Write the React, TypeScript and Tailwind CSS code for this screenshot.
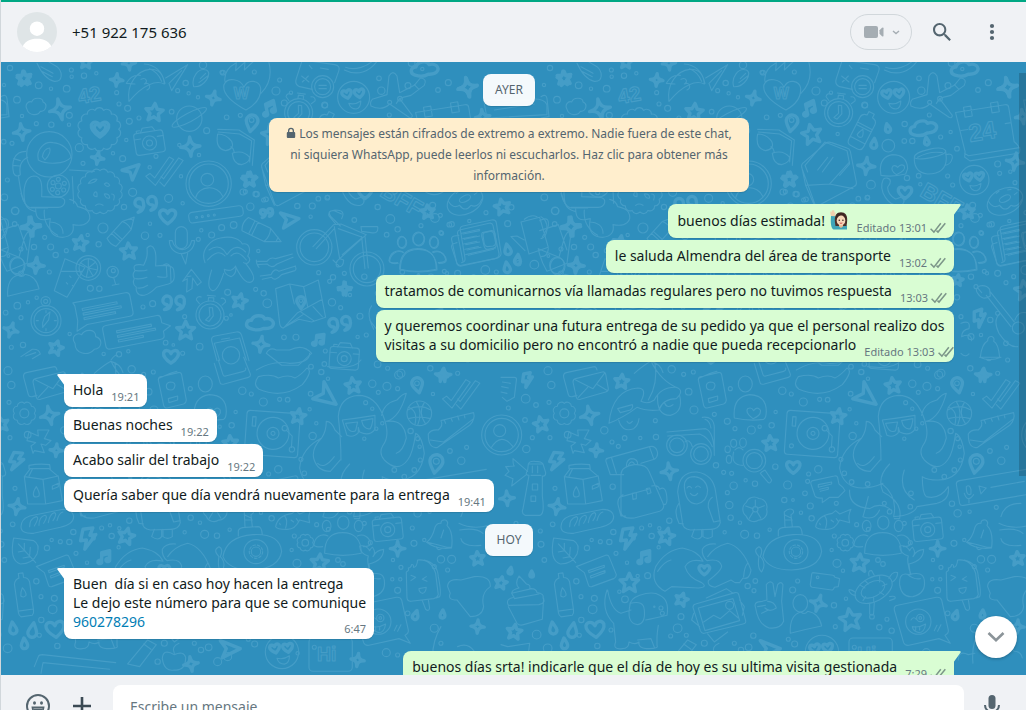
import React from "react";

type Pt = [number, number, number];

const HEART = "M0 9C-7 4-11 0-10-5C-8-10-2-9 0-4C2-9 8-10 10-5C11 0 7 4 0 9Z";
const STAR = "M0-10L3-3.5L10-3L4.800 2L6.500 9.500L0 5.500L-6.500 9.500L-4.800 2L-10-3L-3-3.500Z";
const SPARK = "M0-10C.8-3 3-.8 10 0C3 .8 .8 3 0 10C-.8 3-3 .8-10 0C-3-.8-.8-3 0-10Z";
const DROP = "M0-10C3-4 6 0 6 4A6 6 0 0 1-6 4C-6 0-3-4 0-10Z";
const BOLT = "M-4-10L6-10L2-3L8-3L-5 10L-2 1L-8 1Z";
const PIN = "M0 10C-4 4-7 1-7-3A7 7 0 0 1 7-3C7 1 4 4 0 10Z";
const PLANE = "M-10-8L10 0L-8 9L-4 0Z";
const NOTE = "M-5 8V-7L7-10V5M-5-3L7-6M-5 8A3 2.500 0 1 1-5 6M7 5A3 2.500 0 1 1 7 3";
const CLOUD = "M-14 7C-22 4-19-5-12-4C-10-12 4-12 6-6C14-8 20-2 17 3C14 8 8 7 4 7C-2 10-9 9-14 7Z";
const QUOTES = "M-4-3A4 4 0 1 0-8 1C-6 1-6 4-9 6C-4 5-3 0-4-3ZM8-5A4 4 0 1 0 4-1C6-1 6 2 3 4C8 3 9-2 8-5Z";

function Shape({ d, x, y, s = 1, r = 0 }: { d: string; x: number; y: number; s?: number; r?: number }) {
  return (
    <path d={d} transform={`translate(${x} ${y}) rotate(${r}) scale(${s})`} vectorEffect="non-scaling-stroke" />
  );
}

function Many({ d, at, r = 0 }: { d: string; at: Pt[]; r?: number }) {
  return (
    <>
      {at.map(([x, y, s], i) => (
        <Shape key={i} d={d} x={x} y={y} s={s / 10} r={r + ((i * 17) % 30) - 12} />
      ))}
    </>
  );
}

function Dots({ at }: { at: Pt[] }) {
  return (
    <>
      {at.map(([x, y, r], i) => (
        <circle key={i} cx={x} cy={y} r={r} />
      ))}
    </>
  );
}

function wavy(cx: number, cy: number, r: number, n: number, bump: number) {
  let d = "";
  for (let i = 0; i <= n; i++) {
    const a = (i / n) * Math.PI * 2;
    const x = (cx + r * Math.cos(a)).toFixed(1);
    const y = (cy + r * Math.sin(a)).toFixed(1);
    d += i === 0 ? `M${x} ${y}` : `A${bump} ${bump} 0 0 1 ${x} ${y}`;
  }
  return d + "Z";
}

function LoveFace({ x, y, r }: { x: number; y: number; r: number }) {
  return (
    <g>
      <circle cx={x} cy={y} r={r} />
      <Shape d={HEART} x={x - r * 0.42} y={y - r * 0.2} s={r / 34} r={-14} />
      <Shape d={HEART} x={x + r * 0.35} y={y - r * 0.25} s={r / 34} r={-8} />
      <path d={`M${x - r * 0.3} ${y + r * 0.38}q${r * 0.4} ${r * 0.1} ${r * 0.75}-${r * 0.15}q0 ${r * 0.45}-${r * 0.3} ${r * 0.5}q-${r * 0.35} 0-${r * 0.45}-${r * 0.35}z`} />
    </g>
  );
}

function Camera({ x, y, r }: { x: number; y: number; r: number }) {
  return (
    <g transform={`translate(${x} ${y}) rotate(${r})`}>
      <rect x="-44" y="-30" width="88" height="66" rx="9" />
      <path d="M-22-30l7-13h30l7 13M-44-12h20M26-12h18M-34-30v-7h10" />
      <circle r="21" cy="4" />
      <circle r="9" cy="4" />
    </g>
  );
}

function Watch({ x, y, r }: { x: number; y: number; r: number }) {
  return (
    <g transform={`translate(${x} ${y}) rotate(${r})`}>
      <circle r="42" />
      <circle r="33" />
      <path d="M-4-22l4 24l-12 14l10 4l12-18l-4-24zM-8-42v-10h16v10M-12-58h24M-34-32l-10-10a10 10 0 0 1 14-10M34-32l10-10a10 10 0 0 0-14-10" />
    </g>
  );
}

function Gear({ x, y, r }: { x: number; y: number; r: number }) {
  return (
    <g>
      <path d={wavy(x, y, r, 8, r * 0.42)} />
      <circle cx={x} cy={y} r={r * 0.45} />
    </g>
  );
}

function People({ x, y }: { x: number; y: number }) {
  return (
    <g transform={`translate(${x} ${y})`}>
      <ellipse cx="4" cy="-52" rx="17" ry="20" />
      <ellipse cx="-46" cy="-42" rx="13" ry="17" />
      <ellipse cx="50" cy="-42" rx="13" ry="17" />
      <path d="M-52 40c0-45 20-62 54-62s56 20 56 62q-55 12-110 0zM-58 20c-14 2-26 0-26-6c2-22 22-36 42-26M64 20c12 0 22-2 22-10c-4-20-22-30-40-22" />
    </g>
  );
}

function Ticks({ x, y, s = 1 }: { x: number; y: number; s?: number }) {
  return (
    <path
      transform={`translate(${x} ${y}) scale(${s})`}
      d="M-50 22l13-9l15 14l46-66l14 8l-58 82zM-2 22l8 8l48-66l14 8l-60 82l-14-14"
    />
  );
}

function Person({ x, y }: { x: number; y: number }) {
  return (
    <g transform={`translate(${x} ${y})`}>
      <ellipse cx="-16" cy="-36" rx="22" ry="26" />
      <path d="M-46 54c-2-36 8-58 32-64q10 10 20-2c26 4 38 24 42 44q-50 10-94 22z" />
    </g>
  );
}

function Handset({ x, y }: { x: number; y: number }) {
  return (
    <path
      transform={`translate(${x} ${y})`}
      d="M-30-34c4-10 22-6 22 4c0 12-6 12-8 18c0 12 8 26 22 34c8 4 12-8 22-2c10 8 4 20-6 22c-36 6-66-44-52-76z"
    />
  );
}

/* Doodles of the upper left part. */
function UpperLeft() {
  return (
    <g transform="translate(0 60) scale(.3333)">
      <Dots at={[[27,24,8],[9,75,5],[113,76,10],[150,86,5],[48,119,10],[211,30,6],[212,50,5],[249,47,8],[286,40,5],[197,86,10],[347,98,6],[354,132,6],[380,145,9],[205,166,9],[204,194,5],[151,194,8],[106,191,6],[63,168,5],[33,250,6],[8,245,7],[235,263,12],[246,310,6],[336,280,5],[365,296,9],[376,240,5],[385,184,9],[414,174,6],[512,155,7],[465,289,6],[446,322,5],[540,349,5],[395,397,12],[369,441,8],[503,415,12],[545,430,5],[447,491,5],[432,527,11],[477,526,6],[601,511,5],[632,525,9],[592,538,6],[662,503,9],[698,495,10],[748,440,11],[733,395,6],[767,403,8],[788,420,6],[617,212,9],[535,255,5],[594,285,5],[606,15,11],[663,37,6],[554,69,8],[530,92,6],[563,100,5],[591,112,5],[677,172,7],[718,166,6],[825,93,12],[836,60,6],[870,98,5],[850,129,9],[43,453,11],[41,492,7],[19,360,6],[10,412,10],[131,532,6],[60,567,6],[99,561,8],[149,561,9],[164,585,8],[196,572,6],[306,504,15],[293,553,8],[260,525,5],[145,636,6],[268,685,9],[295,686,8],[107,713,5],[81,727,5],[49,737,10],[14,758,7],[60,773,6],[206,822,5],[66,855,8],[31,862,6],[308,882,5],[354,883,8],[382,874,5],[426,741,6],[455,731,9],[494,848,7],[517,855,4],[596,860,10],[680,697,9],[764,688,6],[788,700,8],[799,730,13],[676,775,6],[772,573,5],[953,638,6],[889,438,8],[934,438,9],[979,413,7],[929,470,5],[1060,480,7],[986,664,6],[993,727,11],[1019,743,6],[1047,705,5],[1077,769,9],[1096,825,6],[1070,831,5],[849,832,7],[885,832,9],[973,873,6],[971,135,9],[690,765,4],[22,588,4],[551,770,6],[545,880,6]]} />
      <Many d={STAR} at={[[70,54,21],[460,156,26],[744,358,21],[238,549,22],[383,573,24],[716,723,22],[554,811,27],[165,863,21],[255,6,18]]} />
      <Many d={SPARK} at={[[177,148,32],[347,60,19],[62,216,25],[290,294,19],[568,260,29],[637,114,21],[90,500,29],[30,810,22],[104,617,22],[1032,686,20],[780,853,24],[384,10,20]]} />
      <Many d={NOTE} at={[[807,145,21],[955,840,18]]} />
      <Shape d={HEART} x={500} y={470} s={2.4} />
      <Shape d={PIN} x={752} y={190} s={2.5} r={10} />
      <circle cx="752" cy="180" r="7" />
      <Shape d={PLANE} x={395} y={330} s={2.5} r={-40} />
      <Shape d={PLANE} x={867} y={478} s={2.7} r={-5} />
      <Shape d={QUOTES} x={440} y={438} s={3.2} />
      <Shape d={QUOTES} x={522} y={735} s={3.2} r={10} />
      <Shape d={QUOTES} x={1022} y={798} s={3.2} />
      <Shape d={QUOTES} x={800} y={462} s={1.8} />
      <Shape d={CLOUD} x={778} y={790} s={2.2} />
      <path d="M78 148c-8-14 4-26 14-22c6-16 34-14 34 0c16 6 8 30-8 28c-6 14-34 14-40-6zM222 850c-14-20 6-34 20-26c10-18 44-18 42 6c24 8 18 36-4 38c-20 22-58 14-58-18z" />
      <path d="M108 10c12 26 28 50 52 54c26 2 26-28 8-44l-24-14M122 34l32 16M120 20l36 20M578 80c-8-28 14-58 38-50c20 8-4 52-38 50zM598 56l16-16M594 68l26-20M494 54l66-40l-48 78l-8-22l38-38" />
      <text x="228" y="124" fontSize="62" fontWeight="700" transform="rotate(-10 275 90)">42</text>
      <path d="M384 124c-8-52 24-92 62-96c34-2 42 22 44 44c-24-12-62 0-106 52zM402 72l-26-2c12-22 26-26 42-24M420 58c16-8 22 8 10 14c16-8 22 12 8 18M446 26c20 8 30 22 36 38M430 12q50 4 62 58" />
      <path d="M735 150c-40-22-72-48-66-76c10-24 50-18 60 8c12-28 46-20 50 2c2 32-22 54-44 66zM672 64c-4-28 12-44 34-56l-2 24l28-26l-2 24l36-34M780 100c28-28 32-60 24-92" />
      <text x="698" y="118" fontSize="48" fontWeight="700">W</text>
      <path d="M904 0l-18 56c-4 12 0 20 10 24l38 8M905 0l96 14c12 2 16 8 12 20l-12 34M902 48l22 18M922 48l-18 18M958 24l24 4M925 16l8 10M1034 22c24 10 70 0 90-30M1030 30c40 20 80 4 102-32" />
      <circle cx="965" cy="80" r="33" /><circle cx="965" cy="80" r="24" />
      <path d="M954 76h22M954 86h22" />
      <LoveFace x={1058} y={112} r={48} />
      <Watch x={893} y={158} r={8} />
      <circle cx="565" cy="176" r="38" />
      <ellipse cx="565" cy="172" rx="58" ry="13" transform="rotate(-28 565 172)" />
      <path d={wavy(295, 208, 58, 14, 14)} />
      <Shape d={HEART} x={297} y={208} s={2.6} /><Shape d={HEART} x={297} y={208} s={1.7} />
      <Camera x={445} y={245} r={-9} />
      <Camera x={1030} y={892} r={4} />
      <circle cx="145" cy="283" r="68" />
      <path d="M112 300c-8-32 20-58 44-52c26 2 50 20 54 44c-20 22-74 22-98 8zM124 290q4-24 22-26q6 14-14 36zM74 274c-34 0-44 32-36 66c4 10 16 10 20 4c-4-24 0-40 22-52M38 296l20 6M36 316l20 2M52 346c6 40 8 64 20 84q8 20 30 24M72 428c-8-40 0-78 26-80c24 0 26 24 24 62l56 2c22 6 14 28-6 30l-82 0M104 446c0 28 10 40 44 30c-10 44 14 56 36 56c28-2 36-18 32-38c38 8 60-12 46-38c-8-12-24-14-32-16c-4-14-14-20-24-22M206 330l74 4M214 350l4 80M186 520c0-24-20-34-38-34" />
      <circle cx="172" cy="378" r="33" /><circle cx="172" cy="378" r="9" />
      <Dots at={[[172,358,6],[190,370,6],[188,390,6],[170,398,6],[154,388,6],[156,368,6]]} />
      <path d={wavy(297, 394, 62, 16, 14)} />
      <path d="M262 370q12-16 26-12q-6 12-26 12M310 372q10-8 16 4q-8 8-16-4M280 398q10-8 8 12q-14 0-8-12M310 402q4 16 16 12q0-14-16-12M332 402q12 0 6 18M284 436q10-8 22 0" />
      <Ticks x={482} y={328} s={0.95} />
      <circle cx="623" cy="371" r="68" /><circle cx="623" cy="371" r="59" /><circle cx="619" cy="359" r="19" />
      <path d="M584 414c8-38 66-42 82-4" />
      <path d="M650 208l64 2l46 30l-6 76M652 216l64 6l36 20l-6 64M650 222q-8 44 24 50q28-6 18-28q-16-22-42-22zM694 280q4 34 28 34q24-6 24-22q-20-24-52-12zM690 260q8 4 10 18" />
      <rect x="-82" y="-16" width="164" height="32" rx="11" transform="translate(645 463) rotate(-8)" />
      <Dots at={[[587,472,3],[604,470,3],[622,467,3],[640,465,3]]} />
      <g transform="translate(365 510) rotate(-48)"><path d="M-50-18h68l34 18l-34 18h-68q-8-18 0-36zM18-18q8 18 0 36M-30-18v36M-22-18v36M42-6v12" /></g>
      <g transform="translate(783 517) rotate(26)"><path d="M-56-22h74l46 22l-46 22h-74q-12-22 0-44zM18-22q10 22 0 44M-34-22v44M-24-22v44M50-8v14" /></g>
      <circle cx="940" cy="562" r="53" /><circle cx="940" cy="562" r="43" /><circle cx="1098" cy="627" r="51" /><circle cx="1098" cy="627" r="41" />
      <path d="M936 560l62-66l22-2l76 32l-80 72l-16-96M946 566l54-60M1012 506l72 26l-60 52M1018 498l-28-28q-14-20 10-18l22 10M1022 476q14-26-20-26q-22 2-18 18l20 24M1080 500h50q4 22-20 18l-28-4zM1092 528l10 96M1082 530l10 96M1016 596q-16 12-8 24q20 4 20-20zM996 600l20 20" />
      <rect x="523" y="500" width="36" height="66" rx="18" />
      <path d="M505 542c2 52 72 52 76 0h-9c-6 36-50 36-58 0zM540 580l14 32l6-32" />
      <path d="M612 608c-16-40 20-70 46-74c40-8 60 6 66 18c26-6 24 24 16 36c14 12 0 28-12 20M624 570q26-18 44 0l10 14l12-14q20-18 44 6M620 600q30-36 52-12M690 588q20-22 46 12M670 628q22 10 34-10q4 24-14 32q-20-6-20-22zM668 640q-18 54-34 52q-20-8-2-62M704 620q30 60 50 44q14-12-20-54" />
      <path d="M402 632q-10-20 16-18l10 2c10-20 12-30 10-52q14-14 22 4c8 14 4 32 4 50l20-2q34 0 34 14c4 26 2 36-16 42l-36 10q-20 20-36 24c-22 2-26-14-24-24q-14-10-6-26q-8-12 2-24zM404 632q24 2 34-2M404 656q20 2 34-4M410 684q16 2 30-8M470 650q20 4 28 0l-2-32M488 615q12-8 20 4l2 46" />
      <path d="M770 604l28 0q10-14 26-8l50-14M770 614l28-2q14 16 30 0l48-20M766 600q0 14 8 22M778 648l32-4q10-22 24-10l50-16M784 658l28-6q10 14 30-8l40-12q6-6 0-14" />
      <Person x={66} y={655} />
      <path d="M192 596l-32 96l38 20l54-90zM182 634l62 0M206 648l4 4M196 668l4 4M214 676l4 4" />
      <circle cx="262" cy="624" r="37" /><circle cx="262" cy="624" r="28" />
      <path d="M262 624v-28M262 624l22-18M262 624l28 6M262 624l14 24M262 624l-24-16M262 624l-6 28" />
      <circle cx="335" cy="636" r="17" /><circle cx="337" cy="632" r="6" /><path d="M338 653l6 20M334 676l20-4" />
      <path d="M545 664l26-36l30 38l-12 10l-14-22l-2 32l-16 10l2-40zM560 650l10-2" />
      <g transform="translate(305 748) rotate(-11)"><path d="M-84-36h160q12 0 12 12v48q0 12-12 12h-130l-34 14l8-30v-46q-4-10-4-10zM-60-14h106v6h-106zM-60 0h116v6h-116zM-60 14h96v6h-96z" /></g>
      <g transform="translate(408 815) rotate(-11)"><path d="M-88-36h156q10 0 10 12v12l24 14l-24 12v10q0 12-12 12h-154q-12 0-12-12v-48q0-12 12-12zM-60-14h106v6h-106zM-60 0h116v6h-116zM-60 14h76v6h-76z" /></g>
      <circle cx="135" cy="782" r="45" /><circle cx="135" cy="782" r="36" /><circle cx="134" cy="724" r="14" /><circle cx="134" cy="724" r="6" />
      <path d="M125 788l6-18l16-14l-4 24l-18 22zM106 782h6M160 782h6M135 752v6M135 806v6" />
      <Watch x={627} y={765} r={4} />
      <path d="M824 686l42-14l42 8l44-20l22 112l-42 14l-38-8l-48 26q-8-2-10-14zM866 672l14 60M908 680l12 60M848 804l42-46l74-40M900 756l38 26M852 800l54-36M936 740l28 30" strokeDasharray="none" />
      <Shape d={PIN} x={900} y={728} s={1.8} /><circle cx="900" cy="722" r="5" />
      <path d="M632 842q-2-12 10-14l64-12q12-2 16 10l22 76M632 842l16 60M640 850l76-16l20 66M640 850l16 52M662 838l24-4" />
      <circle cx="690" cy="886" r="26" />
      <path d="M796 880q10-20 30-10l40 0q40-20 66 10l-40 36h-50zM60 890l34-22q20-2 24 14l-24 14M74 888l30-10M330 900q14-20 20-12" />
      <Shape d={HEART} x={510} y={890} s={2.2} />
      <path d="M0 470q20 10 18 40q-4 24-18 26M0 590q20 0 22-24M0 110q16-10 18 6l6 54l-24 4M1112 738q-18 20 6 70M1106 780l30 40" />
    </g>
  );
}

/* Doodles of the upper right part. */
function UpperRight() {
  return (
    <g transform="translate(200 60) scale(.3333)">
      <Dots at={[[534,55,7],[541,92,11],[621,77,9],[742,68,9],[711,90,7],[632,9,10],[664,27,5],[565,165,6],[491,192,8],[490,243,7],[514,243,8],[599,231,6],[629,216,5],[648,266,7],[372,136,8],[290,222,5],[498,354,8],[533,347,7],[538,373,5],[620,348,6],[635,375,6],[390,374,13],[352,416,7],[380,412,6],[770,312,9],[776,340,6],[808,335,5],[822,368,6],[695,436,9],[718,466,6],[675,465,6],[752,493,8],[660,497,6],[805,483,5],[722,520,6],[770,640,9],[795,668,6],[690,650,8],[738,640,5],[818,650,6],[705,680,6],[748,780,8],[770,760,6],[660,770,6],[690,830,9],[720,825,5],[795,850,7],[770,940,6],[688,925,8],[370,912,7],[600,940,12],[560,925,6],[330,920,7],[800,900,6],[66,38,7],[160,36,6],[126,396,9],[164,402,8],[195,418,7]]} />
      <Many d={STAR} at={[[212,222,29],[146,357,21],[850,690,28],[650,660,16],[680,455,20]]} />
      <Many d={SPARK} at={[[800,82,30],[376,318,26],[845,170,22],[822,305,26],[730,945,20]]} />
      <Many d={DROP} at={[[440,204,13],[399,250,15],[557,243,12]]} />
      <Shape d={CLOUD} x={548} y={205} s={2.2} r={-8} />
      <Shape d={CLOUD} x={672} y={28} s={2.2} r={-4} />
      <g transform="translate(362 215) rotate(27)"><path d="M-24-36q0-14 16-16v-12h18v12q16 2 16 16v74q0 14-14 14h-22q-14 0-14-14zM-24-20h50M-24 28h50M-24-12h50M0-8q10 14 8 22q-8 8-16 0q0-8 8-22z" /></g>
      <path d="M182 322q-2-10 8-16l64-56q8-6 18-2l46 16q8 2 10 10l18 92q2 10-8 14l-104 56q-10 4-14-8zM182 320l12 56l72-4l60-66M266 372l70 14M194 376l26 60M200 336l-8-20l60-70l66 26l8 40l-30 34M230 330l30-38M244 336l32-44" />
      <path d="M564 48q12-20 24 0l8 50l44-22l18-22q22 2 12 22l-40 30q-26 6-34 10l38 50q0 10-10 6l-58-40q-22 22-56 6q-4-12 4-20l44-14zM586 130l10-14M640 74l14 14" />
      <Dots at={[[566,127,6],[597,116,7]]} />
      <g transform="translate(735 210) rotate(-9)"><path d="M-82-66h150q10 0 10 10v104q10 10 14 24l-4 12h-150l-14-14l4-16zM-74-10h20M60-10h18M-74 60l10 8h156M-56-78h22v30h-22zM26-78h22v30h-22z" /></g>
      <text x="682" y="238" fontSize="74" fontWeight="700" transform="rotate(-9 735 210)">24</text>
      <path d="M520 292q0-14 44-24q40-10 50 4q4 10-40 20q-48 10-54 0zM520 292q-2 46 40 50q56 0 56-48l-2-22M614 284q22-6 20 10q-4 20-22 22M530 292q36-20 74-14" />
      <circle cx="442" cy="257" r="19" />
      <path d="M418 330q0-40 36-46q44 0 46 42l-6 16q-40 10-74 4zM466 344q-20-14-10-26q8-4 14 4q10-12 20-4q6 14-24 26z" />
      <Shape d={HEART} x={492} y={398} s={2} />
      <Handset x={456} y={394} />
      <text x="540" y="418" fontSize="68" fontWeight="700" transform="rotate(30 560 400)">BFF</text>
      <LoveFace x={700} y={360} r={44} />
      <ellipse cx="792" cy="424" rx="56" ry="38" transform="rotate(-25 792 424)" />
      <ellipse cx="792" cy="416" rx="18" ry="9" transform="rotate(-25 792 416)" />
      <path d="M742 424q14 24 34 12q16 22 34 0q20 10 34-20M766 400l8-6M800 390l10-2M820 404l8-6" />
      <People x={650} y={590} />
      <path d="M752 540q-2-10 8-12l14-2M752 540l16 72q4 8 14 6l100-22q14-4 12-16l-18-84q-2-8-12-6l-88 20q-8 2-6 12l16 82M786 522l50-10M790 538l46-10M794 554l42-8M798 570l42-8M802 586l76-18M850 518l20-4q6 0 8 6l6 28q0 8-8 10l-16 2q-8 0-10-8l-4-26q0-6 4-8z" />
      <path d="M710 700q-10-14 6-22q20-4 30 10l2 20q-24 16-38-8zM736 706l74 94M748 696l72 90M778 760q-24 20-4 60q30 44 56 40M822 780q10-30 40-20M710 684l12 14" />
      <circle cx="832" cy="804" r="18" />
      <Shape d={BOLT} x={717} y={775} s={2.4} r={-20} />
      <path d="M740 842q0-14 14-12q8 4 4 14q14 6 18 48l-58 0q4-40 22-50zM716 892q30 14 64 0M736 898q8 8 16 0M660 790q30-12 24 16q-22 4-22 24q30-12 30 12M660 880q14 14 24 2" />
      <path d="M1012 566l62 26l16-58q14-30 20-14l-12 90l-60 24q-20-34-26-68zM1016 512l56-18l26 76" />
    </g>
  );
}

/* Band between the encryption card and the first bubbles. */
function MiddleBand() {
  return (
    <g transform="translate(260 60) scale(.3333)">
      <People x={468} y={588} />
      <path d="M572 562q-2-10 10-12l6-2M572 562l16 48q4 8 14 6l100-20q20-4 18-18l-14-90q-2-10-14-8l-86 18q-10 2-8 12l14 84q2 12-10 14M602 520l54-12M606 536l40-8M608 552l40-8M612 568l40-8M614 584l90-20M664 518l28-6q8 0 10 8l4 34q0 8-8 10l-18 4q-8 0-10-8l-8-32q0-8 2-10z" />
      <path d="M780 486l56-14l26 90l-58 20zM790 540l-22-12l-18 2l42 42M836 482q30-16 26 16l-18 34M790 478q20-16 38-8" />
      <Dots at={[[740,491,9],[751,442,8],[675,458,6],[772,610,8],[820,614,13],[673,630,13],[706,636,6],[565,494,7],[522,474,13],[540,518,6],[410,508,8],[388,477,13],[350,441,8],[377,524,7],[424,636,7],[386,690,11],[468,712,8],[250,640,6],[216,652,8],[900,640,7],[882,452,11],[550,634,6],[310,650,8],[350,700,7]]} />
      <Many d={STAR} at={[[724,440,23],[908,54,20]]} />
      <Many d={SPARK} at={[[930,500,29],[946,616,24],[620,82,28],[250,686,19]]} />
      <Many d={DROP} at={[[740,568,16],[770,598,15],[738,622,16]]} />
      <ellipse cx="888" cy="616" rx="22" ry="25" />
      <path d="M668 120h120q60-10 70 14v30l-180 10zM690 136l120-18M700 150l120-18M900 400q10 40 30 44l50 0M970 450q-4 50 40 76" />
    </g>
  );
}

/* Doodles of the lower half. */
function Lower() {
  return (
    <g transform="translate(-40 360) scale(.3333)">
      <Dots at={[[141,32,12],[151,75,11],[74,116,13],[105,135,7],[144,127,6],[72,180,7],[94,233,6],[147,233,6],[76,267,11],[200,224,10],[310,211,11],[333,246,6],[352,259,6],[371,234,7],[418,234,5],[465,231,8],[463,182,6],[512,28,11],[548,43,6],[577,36,6],[563,95,10],[579,150,12],[640,163,6],[688,86,6],[679,184,9],[702,206,6],[751,210,12],[776,200,5],[812,196,8],[824,156,5],[844,92,11],[871,102,6],[907,126,12],[956,118,6],[980,119,7],[1049,101,7],[1046,148,5],[1081,36,8],[1101,56,5],[1250,13,10],[1313,45,12],[1234,71,11],[1278,79,12],[1252,97,6],[1310,86,6],[1416,102,5],[1055,228,11],[1066,190,5],[1349,213,8],[1370,236,6],[823,320,8],[645,316,8],[668,337,6],[692,340,6],[734,361,5],[762,371,8],[698,377,11],[679,398,6],[685,435,11],[689,473,8],[717,488,5],[860,375,12],[920,364,6],[912,400,7],[850,420,8],[876,420,4],[952,328,11],[923,342,6],[928,438,9],[900,458,5],[932,475,8],[1006,430,6],[1067,494,6],[1102,508,6],[1166,455,7],[1210,490,6],[1353,431,8],[1370,460,11],[1354,504,6],[1406,455,5],[1359,550,9],[1486,442,6],[1467,273,7],[1501,302,11],[1517,262,6],[162,385,6],[335,380,8],[155,493,7],[118,513,6],[120,553,9],[130,600,7],[258,564,8],[272,540,5],[298,545,6],[325,546,8],[337,516,8],[345,580,6],[378,608,5],[422,504,6],[447,496,5],[452,528,8],[397,534,6],[473,562,5],[475,505,5],[505,482,8],[671,517,5],[731,523,12],[768,527,8],[806,509,5],[992,570,5],[1000,528,6],[1008,610,12],[1026,632,5],[1131,600,7],[1146,612,7],[1228,548,6],[1320,622,6],[1296,600,5],[1294,658,5],[1310,691,9],[1318,658,5],[1440,598,11],[1472,598,12],[1460,630,6],[763,663,7],[740,678,8],[759,692,6],[875,690,9],[890,663,6],[1035,716,5],[999,736,8],[1003,800,6],[1113,770,7],[1158,778,6],[1135,802,8],[1172,812,8],[240,710,6],[280,715,9],[275,748,13],[372,718,10],[355,695,5],[440,647,9],[410,648,5],[226,664,8],[241,780,8],[107,824,13],[235,826,6],[289,858,8],[330,810,6],[540,770,9],[530,805,13],[509,828,6],[556,826,6],[757,827,8],[743,862,10],[862,838,6],[881,852,9],[1060,862,6],[1276,878,12],[1310,885,6],[1010,880,5],[140,865,13],[22,144,6],[45,490,6],[1420,620,6],[1390,540,5],[1420,805,12],[1440,850,6],[590,905,8],[610,850,9],[770,905,12],[800,890,12],[720,870,8],[700,850,6],[1340,760,7]]} />
      <Many d={STAR} at={[[120,192,22],[362,64,21],[1176,76,23],[1012,168,22],[808,249,22],[496,528,24],[385,668,28],[542,718,19],[1076,608,26],[1048,778,32],[40,815,22],[1550,595,20],[0,668,18]]} />
      <Many d={SPARK} at={[[266,166,28],[286,271,19],[505,334,25],[168,440,24],[18,415,22],[1442,46,19],[1310,566,22],[952,730,25],[1550,800,20],[690,912,22],[1190,900,20]]} />
      <Many d={DROP} at={[[156,804,18],[215,810,22],[190,850,16],[28,632,10],[92,642,9],[1364,765,14],[1445,762,12]]} r={4} />
      <Many d={BOLT} at={[[80,60,20],[167,304,26],[382,536,30]]} />
      <Shape d={HEART} x={283} y={808} s={2.7} r={-6} />
      <Shape d={HEART} x={877} y={322} s={2} />
      <Shape d={HEART} x={610} y={630} s={1.6} />
      <Shape d={PIN} x={1370} y={76} s={2.3} r={-12} /><circle cx="1368" cy="70" r="7" />
      <Shape d={PIN} x={1425} y={312} s={2.8} r={10} /><circle cx="1426" cy="304" r="9" />
      <Shape d={NOTE} x={432} y={592} s={2} />
      <Shape d={PLANE} x={1098} y={110} s={3.6} r={40} />
      <Shape d={PLANE} x={808} y={866} s={3} />
      <Gear x={190} y={160} r={30} />
      <Gear x={1033} y={548} r={22} />
      <path d="M188 52q-2-12 8-14l84-18q6 0 8 10M188 52l14 52q2 8 12 6l14-4M224 56l80-20q8-2 10 6l8 44q0 8-8 10l-76 22q-10 2-12-6l-10-46q0-8 8-10zM224 60l52 26l36-48M232 112l28-30M290 74l30 18" />
      <path d="M0 52h40q8 0 6 10l-6 50l-22 12l-14-12M4 66l24 4M2 80l20 4M0 96l18 4" />
      <path d="M324 190q10-100 86-106q30 0 10 40q20 10 40-4q20-40 66-38q26 10 0 34q-40 0-52 34q-40 4-66-8q-40 30-84 48zM350 146l44-12q4 8-6 16l-30 8zM462 10q10 60-20 110M400 40q30-26 50-36q30 8 36 34M352 176q10 44 46 30q14-10 16-30M470 106q-4 60 38 60q40-10 28-60M490 126q6 22 26 8M378 184q6 12 16 0M450 4q30 60 80 80" />
      <path d="M592 60q0-8 8-10l52-12q8-2 10 6l14 76q0 8-8 12l-50 12q-8 0-10-8l-16-76M596 54l32-14l20-6M616 78q0-10 12-12q14 0 14 10q-2 14-12 14q-14 0-14-12zM622 116l28-8v12l-26 8z" />
      <ellipse cx="733" cy="72" rx="21" ry="24" />
      <path d="M700 174q-6-64 46-70q50 2 50 50q0 20-8 24q-46 6-88-4zM756 176q-24-18-16-30q12-6 18 6q10-14 20-2q4 16-22 26z" />
      <path d="M760 10l18 60q2 4 12 2l72-20q8-2 6-10l-20-50M772 0l14 44q2 6 8 4l54-14q8-2 6-10M886 30q50-30 100-20q60 0 60-30M892 50q40-10 60 4q30-12 50 0q20-10 36-30q20 8-14 50q-60 44-130 14q-20-14-2-38zM1100 20q80 10 100-20" />
      <g transform="translate(934 222) rotate(4)"><rect x="-80" y="-66" width="160" height="132" rx="10" /><circle r="48" cx="2" cy="-2" /><circle r="18" cx="2" cy="-2" /><circle r="6" cx="2" cy="-2" /><circle r="8" cx="36" cy="-20" /><circle r="8" cx="62" cy="42" /><path d="M42-14l18 16v34M-62-48h10v28h-10z" /><circle r="6" cx="-60" cy="40" /></g>
      <circle cx="1375" cy="160" r="37" />
      <path d="M1340 150q34-20 70 0M1342 176q34-10 66 0M1366 124q20 30 4 72M1390 128q-20 30 4 64M1342 142q30 10 20 52" />
      <Ticks x={1492} y={96} s={0.95} />
      <path d="M1402 222q8-14 30-12q16-14 8-28l54-14l44-10q6 20-12 38l-96 66q-28 6-28-40zM1408 240l40 6l90-70M1450 180l4 10M1470 174l4 10M1490 168l4 12M1510 164l2 10" />
      <circle cx="2" cy="225" r="60" /><circle cx="2" cy="225" r="50" /><circle cx="-4" cy="212" r="18" /><path d="M-30 264q30-50 66-4" />
      <path d="M204 216l28 12l-2-18l34 0l-14 26l20 6l-16 14l-14-4l10 26l-30-6l-4 8l-6-22l14-10l-26-6z" />
      <path d="M498 216l116-10q26 10 26 80M500 228l96-6q26 10 38 38M604 172q34-4 36 30v70M612 178q14 4 18 26M552 246q14-12 22 14" />
      <circle cx="528" cy="256" r="31" /><circle cx="528" cy="256" r="22" /><circle cx="600" cy="282" r="31" /><circle cx="600" cy="282" r="22" />
      <ellipse cx="698" cy="250" rx="9" ry="12" /><ellipse cx="726" cy="248" rx="10" ry="14" /><ellipse cx="680" cy="268" rx="8" ry="10" /><ellipse cx="684" cy="298" rx="8" ry="12" />
      <path d="M702 270q12-14 24 0M698 276q-10 40 28 40M782 336l10-6l20 30q-4 14-12 6l-22-26z" />
      <circle cx="760" cy="302" r="34" /><circle cx="760" cy="302" r="24" />
      <path d="M320 296q-8 0-4 12l12 36h40M316 296l130-36q16-4 22 12q6 16-8 26l-40 12M360 344q0-24 40-30q36-2 44 20l44 100q2 14-12 20l-76 20q-40 4-40-20zM362 410l80-22M366 404q-20 10-14 34l8 30l14 0M452 378q20-4 24 10q20-14 22 30q0 20-12 14M376 320q0-20 14-24q20 0 20 16M382 316q10-20 20-2M394 400l12-2v18l-10 2zM436 386l10-2l4 14l-10 4zM332 294l14 46M446 262l12 34" />
      <path d="M190 350l18-24h56l28 24l12 72l-50 10h-54zM190 350l56 8l46-10M246 358l8 74M204 326v-10q30-6 62-2l2 14M226 380q12 20 8 28q-10 6-16 0q-4-10 8-28zM274 378l18-8v10l-18 8zM214 328l-10 20" />
      <path d="M180 500q0-22 26-32l100-20q30 0 32 22q0 22-40 32l-80 18q-38 2-38-20zM206 500q0-24 20-30q10 2-6 28M234 496q0-26 18-30q10 2-4 24M262 488q4-26 18-30q10 2-4 24M288 482q6-24 18-26M82 312l44 0l8 26q0 12-10 10v60q8 56-8 58l-44 0q-12-6-6-20l18-100q-14 0-4-16zM82 312q4-10 20-8q20 0 24 8M90 346h30M94 318v20M110 318v20M94 372h16v18h-16zM90 408h14v16h-14zM80 334l-44-38q0 20 4 22l-26 2l10 14l-12 12l24 10l-4 22l44-34" />
      <path d="M530 396q4-62 58-60q50 8 56 60l14 92q-4 20-30 20l-60 2q-26-4-24-26zM534 430q-18 24 0 60l14 2M550 380q0-30 30-30q36 4 40 40q0 34-32 42q-34 0-38-52zM634 412q-14 10-12 30l16 44l20-4M558 384q6-10 14 0M584 382q6-8 14 0M568 400q12 14 22 0M580 508l-8 22q20 14 30 0v-20M606 508v22q14 10 28 0v-22" />
      <path d={wavy(763, 448, 34, 5, 25)} /><circle cx="763" cy="448" r="8" /><path d="M763 440v-20M770 445l20-8M768 455l12 20M757 455l-12 20M756 446l-22-8" />
      <path d="M930 372q-2-8 6-10l64-14q8-2 10 4l4 20q14 10 18 20l-20 20l-26 0l-22 16l0-14q-18 2-22-6zM952 374l40-8v6l-40 10zM956 388l26-6v6l-24 6" />
      <path d="M786 590q10-60 90-66q80-4 86 50q-8 52-90 56q-70 0-86-40zM832 528v-16q4-10 20-10l40-2q10 0 12 24M852 500l-2-44q14-14 26-6q6 8-6 14l4 36M850 464l20 10M852 480h22M774 590q-20-20 0-30q14 6 4 30q20 20 4 46q-14-10-8-46z" />
      <circle cx="885" cy="575" r="36" /><circle cx="885" cy="575" r="20" strokeDasharray="8 6" /><circle cx="885" cy="575" r="14" />
      <path d="M944 500q6-34 50-40l10-8l12 10l34-14q-10 20-4 40l-30-8q-14 30-40 28q-28 0-32-8zM970 466q12 14 4 38M990 480l8 6M1006 476l6 8M956 490l2 4" />
      <path d="M1140 300q0-60-8-130q4-60 60-64q50 0 74 60q24 60 0 90q-14 24 4 44q40 40 70 0q16-20 24-80q20 10 26 60q-10 80-80 80q-30 0-46-10q0 50 12 60q40 10 66-30q6 40-34 50l-60 10q-10 26-70 30q14-60-36-100M1142 230q-10-10-20-20q-10-26-26-26q0 30-14 50q-60 30-66 90q10 60 70 60q30 0 60-14M1120 290q-30 40-50 20M1082 234q-30 30-24 60q10 40 50 40l30-34M1166 312q-40 40-20 84q60 30 50 80h-16M1046 390q-4 50 60 56q30-20 60 0M1102 410q-10 40-16 60q34 14 50-20M1276 184q40-10 60-84q-10 0-28 20q-40 10-46 46M1280 184q50-6 56 50q-10 40-30 46M1210 330q-20 60 30 90M1144 180l14 46q20 8 34-8l0-16l4 14q30 14 46-8l0-42q-50 8-98 14M1154 190l36-4l-6 26q-20 10-30-22zM1202 182l34-6q-2 20-8 30q-20 4-26-24z" />
      <Dots at={[[1020,298,6],[1030,340,7],[1052,366,7],[1100,372,7],[1214,128,6],[1234,146,5],[1264,190,5],[1300,330,7],[1330,350,7],[1360,330,7],[1378,300,6],[1376,260,5],[1150,430,6],[1230,400,7],[1228,440,7],[1210,236,5],[1246,206,5]]} />
      <path d="M1366 372q0-8 10-10l200-34M1366 372l10 58q2 8 12 6l200-34M1396 380q10-8 14 8v14q-14 8-14-22zM1390 400q10 30 28 4M1404 418v10M1434 378l22 6l-16 18zM1470 382l100-18" />
      <People x={1143} y={540} />
      <Camera x={1280} y={505} r={-6} />
      <path d="M1440 490q0-12 14-10q10 6 4 16q20 20 14 66l-14 0l-60-16q16-12 24-44q6-14 18-12zM1396 546q30 24 76 18M1426 560q4 14 16 6M1448 510l-8 24M1500 470q10-40 60-40M1494 490q40 20 90 6M1496 510q50-8 70 10M1500 536q4 26 60 20" />
      <path d="M158 534l60 8q20 10 10 40q-14 30-50 30q-34-10-20-78zM172 552l52 56M190 570v-20M206 586l2-24M192 572l-20 4M208 590l-22 4" />
      <path d="M226 620l88-34q8-2 10 4l22 54q0 8-8 12l-66 24q-8 2-10-6l-12-36l-24-18M262 632l48-16v6l-46 16zM268 648l44-16v6l-42 16z" />
      <path d="M464 620q30-50 80-56q50 10 62 40q-40-10-54 16q10 34 50 48q20 14-10 16l-80-4l-20 14q-46-24-28-74zM620 590q20-30 60-40q44 10 70 80q-4 30-24 24l-10 14l-14 0l-12-8l-48 22q-24-4-20-20q40-30 40-44q-6-24-44-16q-16-14-14-34q10-18 40-16M470 634q20-30 40-34M740 610q-10 10-12 40" />
      <path d="M576 742q0-8 8-10l118-34q10-2 12 8l20 76q2 8-8 10l-116 28q-8 2-12-8zM592 744l104-28l20 66l-104 30zM608 786l30-20l20 10l28-24l26 22M616 714l60-28l20 14M578 760l-6 20l24 20M620 822l20 24l40-30M716 720l14 20l-6 26" />
      <circle cx="686" cy="736" r="12" />
      <path d="M764 744q-8-20 20-20l14-4l-2-46q10-14 20-4l6 40l8-36q10-12 16 0l-4 50l6 60q-10 24-44 20q-32-10-40-60zM800 724q20 0 26 20q-20 14-34 0M770 740l24-4M782 760l20-10" />
      <path d="M318 690q-20 60 20 100l6 56q-10 24 20 20q20 0 20-20q20 10 30 0q-4 20 30 20q30 0 24-10l0-20q0-14 4-40M320 690q10 60 40 70l30-10M386 740q0-24 30-34q40-14 60 0q30 14 22 60q-40 10-64 14M388 730q40-10 42 20q4 40-20 44q-36-4-22-64zM410 840l40-4l10 26" />
      <Dots at={[[460,740,2],[480,744,6],[484,760,6]]} />
      <g transform="translate(187 705) rotate(-8)"><path d="M-22-36q4-14 16-16v-14h14v14q14 2 16 16v86q0 10-6 14h-34q-6-4-6-14zM-22 46h46M0-22q10 14 8 24q-8 8-16 0q0-10 8-24z" /></g>
      <path d="M22 740l26 50q8 8 20 4l56-16l4-64M22 736q-10-20 18-24q-20-20 14-28q-14-12 0-36q14 14 22 24q14 2 10 14q20-2 22 12q22 2 18 16q10 14-12 20zM32 700l60-14M40 716l74-14" />
      <ellipse cx="1118" cy="688" rx="60" ry="36" transform="rotate(-28 1118 688)" /><ellipse cx="1116" cy="688" rx="38" ry="22" transform="rotate(-28 1116 688)" />
      <path d="M1164 656q10-24 26-18q0 18-16 28M1062 696q-24-14-16 0q6 10 18 10M1104 648q-4-18 8-16l8 14M1106 730v32q10 8 12-2l2-32M1166 710q20-4 16 6l-16 6M1078 676l14 8M1092 662l10 10M1136 650v16M1158 672l-14 6M1148 704l-12-8M1118 724v-12M1086 722l8-12" />
      <path d="M936 638l60 8q4 0 6 6l14 4l-4 24l-12 2q-2 8-8 8l-58-8q-6-2-6-8l4-30q0-6 4-6z" /><circle cx="950" cy="652" r="4" />
      <path d="M1224 644q-30-10-28 30q6 40 40 36q40-10 34-50q-4-28-46-16zM1230 644q-14-40-8-56q-24-6-26-30q20-4 30 14q8-14 10-8q10 14 0 26q10-20 32-22q0 34-44 44l4 32M1220 644q20 16 38 12" />
      <path d="M1352 614q6-2 6 8q10 0 12-22q40-4 54 40l8 64q-4 10-14 12l-68 8q-12 0-12-12l-2-76q10-4 6-12q8 0 10-10zM1390 600q40 10 42 50q10 50 4 60l-10 4M1384 722l10 26q10 8 12-4l-4-26M1350 646l14 6l-14 10M1396 650l-12 8l14 6M1374 686l22-4q-2 18-12 18q-10-4-10-14z" />
      <path d="M1180 750q-2-12 10-14l116-24q12-2 16 8l20 90q2 10-10 16l16 24l-34-14l-90 20q-12 2-16-8zM1300 812l8-16M1310 814l10-20M1234 800q20 4 40-8q-4 26-20 26q-18-4-20-18zM1244 800v10M1256 800v10M1230 780q8-12 16-2" />
      <circle cx="1252" cy="785" r="38" /><circle cx="1258" cy="774" r="11" /><circle cx="1258" cy="774" r="4" />
      <Person x={914} y={766} />
      <LoveFace x={963} y={876} r={50} />
      <rect x="1044" y="834" width="130" height="100" rx="12" />
      <text x="1068" y="904" fontSize="58" fontWeight="700">Hi</text>
      <path d="M1460 680q0-26 40-20l40-10q50-4 48 30q-30 20-20 60q-4 30-40 30l-40-50q-30 0-20-20zM20 860l66-10l-8 60M0 854l20 6M1440 800q-30 50-24 110M1372 900q0-30 30-16l20-4M1490 860q30-14 50 14q20 0 24 20" />
      <path d="M220 920l12-30q2-6 12-6l220 24M240 940l6-32l200 20" /><path d="M500 912l60-72l26 14l-50 66zM548 852l22 16" />
      <path d="M640 880q-10-20 14-30M640 884q-34-20-36 12q6 40 36 34q34 4 34-38q-6-20-34-8z" />
    </g>
  );
}

function Wallpaper() {
  return (
    <svg
      aria-hidden="true"
      className="pointer-events-none absolute inset-0 h-full w-full select-none"
      fill="none"
      stroke="#459dc7"
      strokeWidth="3.400"
      strokeLinecap="round"
      strokeLinejoin="round"
      fontFamily="'Liberation Sans', sans-serif"
    >
      <defs>
        <g id="doodles" transform="translate(0 -62)">
          <UpperLeft />
          <UpperRight />
          <MiddleBand />
          <Lower />
        </g>
      </defs>
      {[-540, 0, 540, 1080, 1620].map((x) => (
        <use key={x} href="#doodles" x={x} />
      ))}
    </svg>
  );
}

function DoubleCheck() {
  return (
    <svg viewBox="0 0 16 12" className="h-3 w-4" fill="none" stroke="#7c9689" strokeWidth="1.500" aria-label="Entregado">
      <path d="M.6 6.800L3.900 10.100L10.800 1.200M6.500 8.600L8 10.100L15.300 1.200" />
    </svg>
  );
}

function RaisedHand() {
  return (
    <svg viewBox="0 0 18 20" className="mx-px inline-block h-5 w-[18px] align-bottom" role="img" aria-label="Mujer levantando la mano">
      <path d="M.8 9.500L1 5.500L5 5.500L5.500 14L17 15.500V19.500H3.500C1.500 19 .6 14 .8 9.500Z" fill="#3fa5b8" />
      <path d="M1 6C.2 3.500 0 1.500.8 1.300L1.500 2.600L1.800.4L2.900.3L3.300.2L4.300.5L4.400 2.600L5.400 2.200C5.800 3.800 5.200 5 4.600 6.300Z" fill="#f2cfae" />
      <path d="M5.500 16C3.800 8 5 2.300 11 2.300C17 2.300 18.200 8 16.500 16Z" fill="#4b302a" />
      <path d="M9 14H13V16.500L11 18L9 16.500Z" fill="#e5b991" />
      <ellipse cx="11" cy="10.500" rx="4.300" ry="5" fill="#f6d6b8" />
      <path d="M6.500 10C7 6 10 5 12.500 4.800C14 6 15.500 7.500 15.600 10L16.500 7L13 3L8 3L5.500 7Z" fill="#3d2622" />
      <circle cx="9.300" cy="10.300" r=".8" fill="#3d2622" />
      <circle cx="12.900" cy="10.300" r=".8" fill="#3d2622" />
      <path d="M9.300 12.800Q11 14.800 12.800 12.800Z" fill="#c63f3f" />
    </svg>
  );
}

interface MessageProps {
  lines: React.ReactNode[];
  time: string;
  out?: boolean;
  edited?: boolean;
  tail?: boolean;
  wide?: boolean;
}

function Message({ lines, time, out, edited, tail, wide }: MessageProps) {
  const last = lines.length - 1;
  return (
    <div
      className={[
        "relative rounded-lg pt-1.5 pb-2 pl-[9px] pr-2 text-[14px] leading-[19px] text-[#111b21] shadow-[0_1px_1px_rgba(11,20,26,0.13)]",
        out ? "self-end bg-[#d9fdd3]" : "self-start bg-white",
        out && tail ? "rounded-tr-none" : "",
        !out && tail ? "rounded-tl-none" : "",
        wide ? "w-[65%]" : "max-w-[65%]",
      ].join(" ")}
    >
      {tail && (
        <svg
          viewBox="0 0 8 12"
          aria-hidden="true"
          className={out ? "absolute top-0 -right-[7px] h-3 w-2" : "absolute top-0 -left-[7px] h-3 w-2 -scale-x-100"}
        >
          <path d="M0 0H6.500C7.800 0 8 1 7.400 1.800L0 12Z" fill={out ? "#d9fdd3" : "#ffffff"} />
        </svg>
      )}
      {lines.slice(0, last).map((line, i) => (
        <p key={i} className="whitespace-pre">{line}</p>
      ))}
      <div className="flex items-end justify-between gap-2">
        <p className="whitespace-pre">{lines[last]}</p>
        <span className="-mb-[5px] flex h-[15px] items-center gap-[3px] whitespace-nowrap text-[11px] leading-[15px] text-[#667781]">
          {edited && <span>Editado</span>}
          <time>{time}</time>
          {out && <DoubleCheck />}
        </span>
      </div>
    </div>
  );
}

function DayLabel({ children }: { children: React.ReactNode }) {
  return (
    <div className="self-center rounded-lg bg-white/95 px-3 py-1.5 text-[12px] leading-5 text-[#54656f] shadow-[0_1px_1px_rgba(11,20,26,0.13)]">
      {children}
    </div>
  );
}

export default function App() {
  return (
    <div className="flex h-screen flex-col overflow-hidden border-l border-[#d1d7db] bg-[#f0f2f5] font-['Noto_Sans','Open_Sans',sans-serif]">
      <div className="h-0.5 shrink-0 bg-[#00a884]" />
      <header className="flex h-[60px] shrink-0 items-center px-4">
        <svg viewBox="0 0 40 40" className="size-10" role="img" aria-label="Foto de perfil">
          <defs>
            <clipPath id="avatar"><circle cx="20" cy="20" r="20" /></clipPath>
          </defs>
          <g clipPath="url(#avatar)">
            <rect width="40" height="40" fill="#dfe5e7" />
            <circle cx="20" cy="16.700" r="7.200" fill="#fff" />
            <path d="M4 38C7 29 13 26.800 20 26.800S33 29 36 38V42H4Z" fill="#fff" />
          </g>
        </svg>
        <h1 className="ml-[15px] flex-1 text-[15px] leading-[21px] text-[#111b21]">+51 922 175 636</h1>
        <div className="flex items-center text-[#54656f]">
          <button type="button" aria-label="Videollamada" className="flex h-9 w-[62px] items-center gap-1.5 rounded-full border border-[#d1d7db] pl-[13px] text-[#a5adb3]">
            <svg viewBox="0 0 22 14" className="h-3.5 w-[22px]" fill="currentColor">
              <rect x="0" y="1" width="14" height="12" rx="2" />
              <path d="M15.500 5.200L18 2.800Q19.500 1.800 19.500 3.200V10.800Q19.500 12.200 18 11.200L15.500 8.800Z" />
            </svg>
            <svg viewBox="0 0 8 5" className="h-[5px] w-2" fill="none" stroke="currentColor" strokeWidth="1.400">
              <path d="M1 1L4 3.500L7 1" />
            </svg>
          </button>
          <button type="button" aria-label="Buscar" className="ml-[18px] size-6">
            <svg viewBox="0 0 24 24" fill="currentColor">
              <path d="M15.900 14.300H15L14.700 14c1-1.100 1.600-2.700 1.600-4.300c0-3.700-3-6.700-6.700-6.700S3 6 3 9.700s3 6.700 6.700 6.700c1.600 0 3.200-.6 4.300-1.600l.3.300v.8l5.100 5.100l1.500-1.500L15.900 14.300zM9.700 14.300c-2.600 0-4.600-2.100-4.600-4.600s2.100-4.600 4.600-4.600s4.600 2.100 4.600 4.600S12.300 14.300 9.700 14.300z" />
            </svg>
          </button>
          <button type="button" aria-label="Menú" className="ml-[26px] mr-1.5 size-6">
            <svg viewBox="0 0 24 24" fill="currentColor">
              <circle cx="12" cy="6" r="2.100" /><circle cx="12" cy="12" r="2.100" /><circle cx="12" cy="18" r="2.100" />
            </svg>
          </button>
        </div>
      </header>

      <main className="relative min-h-0 flex-1 overflow-hidden bg-[#2f8fbd]">
        <Wallpaper />
        <div className="relative flex flex-col gap-3 pt-3 pr-[72px] pl-[63px]">
          <DayLabel>AYER</DayLabel>
          <button type="button" className="w-[480px] self-center rounded-lg bg-[#ffeecd] px-3 pt-[5px] pb-1.5 text-center text-[12px] leading-[21px] text-[#54656f] shadow-[0_1px_1px_rgba(11,20,26,0.13)]">
            <svg viewBox="0 0 10 12" className="mr-[3px] -mt-1 inline-block h-3 w-2.5" fill="#54656f" aria-hidden="true">
              <path d="M5 .8A3 3 0 0 0 2 3.800V5H1.800Q.8 5 .8 6V10Q.8 11 1.800 11H8.200Q9.200 11 9.200 10V6Q9.200 5 8.200 5H8V3.800A3 3 0 0 0 5 .8ZM5 2.100A1.700 1.700 0 0 1 6.700 3.800V5H3.300V3.800A1.700 1.700 0 0 1 5 2.100Z" />
            </svg>
            Los mensajes están cifrados de extremo a extremo. Nadie fuera de este chat, ni siquiera WhatsApp, puede leerlos ni escucharlos. Haz clic para obtener más información.
          </button>
          <section className="flex flex-col gap-0.5">
            <Message out tail edited time="13:01" lines={[<>buenos días estimada! <RaisedHand /></>]} />
            <Message out time="13:02" lines={["le saluda Almendra del área de transporte"]} />
            <Message out time="13:03" lines={["tratamos de comunicarnos vía llamadas regulares pero no tuvimos respuesta"]} />
            <Message
              out
              edited
              wide
              time="13:03"
              lines={[
                "y queremos coordinar una futura entrega de su pedido ya que el personal realizo dos",
                "visitas a su domicilio pero no encontró a nadie que pueda recepcionarlo",
              ]}
            />
          </section>
          <section className="flex flex-col gap-0.5">
            <Message tail time="19:21" lines={["Hola"]} />
            <Message time="19:22" lines={["Buenas noches"]} />
            <Message time="19:22" lines={["Acabo salir del trabajo"]} />
            <Message time="19:41" lines={["Quería saber que día vendrá nuevamente para la entrega"]} />
          </section>
          <DayLabel>HOY</DayLabel>
          <Message
            tail
            time="6:47"
            lines={[
              "Buen  día si en caso hoy hacen la entrega",
              "Le dejo este número para que se comunique",
              <a href="tel:960278296" className="text-[#027eb5]">960278296</a>,
            ]}
          />
          <Message out tail time="7:29" lines={["buenos días srta! indicarle que el día de hoy es su ultima visita gestionada"]} />
        </div>
        <div className="absolute top-[11px] right-0 h-[403px] w-[7px] bg-[#0b141a]/20" />
        <button type="button" aria-label="Ir al final" className="absolute right-[9px] bottom-[17px] flex size-[42px] items-center justify-center rounded-full bg-white shadow-[0_1px_3px_rgba(11,20,26,0.3)]">
          <svg viewBox="0 0 18 12" className="h-3 w-[18px]" fill="none" stroke="#8b9499" strokeWidth="2.600">
            <path d="M1.500 2L9 9.300L16.500 2" />
          </svg>
        </button>
      </main>

      <footer className="h-[35px] shrink-0 overflow-hidden">
        <div className="flex h-[62px] items-center pr-[22px] pl-6 text-[#54656f]">
          <button type="button" aria-label="Emojis" className="size-[26px]">
            <svg viewBox="0 0 26 26" fill="none" stroke="currentColor" strokeWidth="2">
              <circle cx="13" cy="13" r="11" />
              <path d="M7.500 14.500H18.500C18 18.500 16 20 13 20S8 18.500 7.500 14.500Z" strokeWidth="1.800" />
              <path d="M9 16.500H17" strokeWidth="1.500" />
              <ellipse cx="9.500" cy="10" rx="1.500" ry="1.800" fill="currentColor" stroke="none" />
              <ellipse cx="16.500" cy="10" rx="1.500" ry="1.800" fill="currentColor" stroke="none" />
            </svg>
          </button>
          <button type="button" aria-label="Adjuntar" className="ml-[18px] size-[26px]">
            <svg viewBox="0 0 26 26" fill="none" stroke="#3b4a54" strokeWidth="2.600">
              <path d="M13 4V22M4 13H22" />
            </svg>
          </button>
          <input
            type="text"
            aria-label="Escribe un mensaje"
            placeholder="Escribe un mensaje"
            className="ml-[18px] h-[42px] min-w-0 flex-1 rounded-lg bg-white px-[17px] text-[14px] text-[#111b21] outline-none placeholder:text-[#667781]"
          />
          <button type="button" aria-label="Mensaje de voz" className="ml-4 size-6">
            <svg viewBox="0 0 24 24" fill="none" stroke="currentColor" strokeWidth="2">
              <rect x="8.500" y="1" width="7" height="14" rx="3.500" fill="currentColor" stroke="none" />
              <path d="M5 11C5 20 19 20 19 11M12 18V22" />
            </svg>
          </button>
        </div>
      </footer>
    </div>
  );
}
